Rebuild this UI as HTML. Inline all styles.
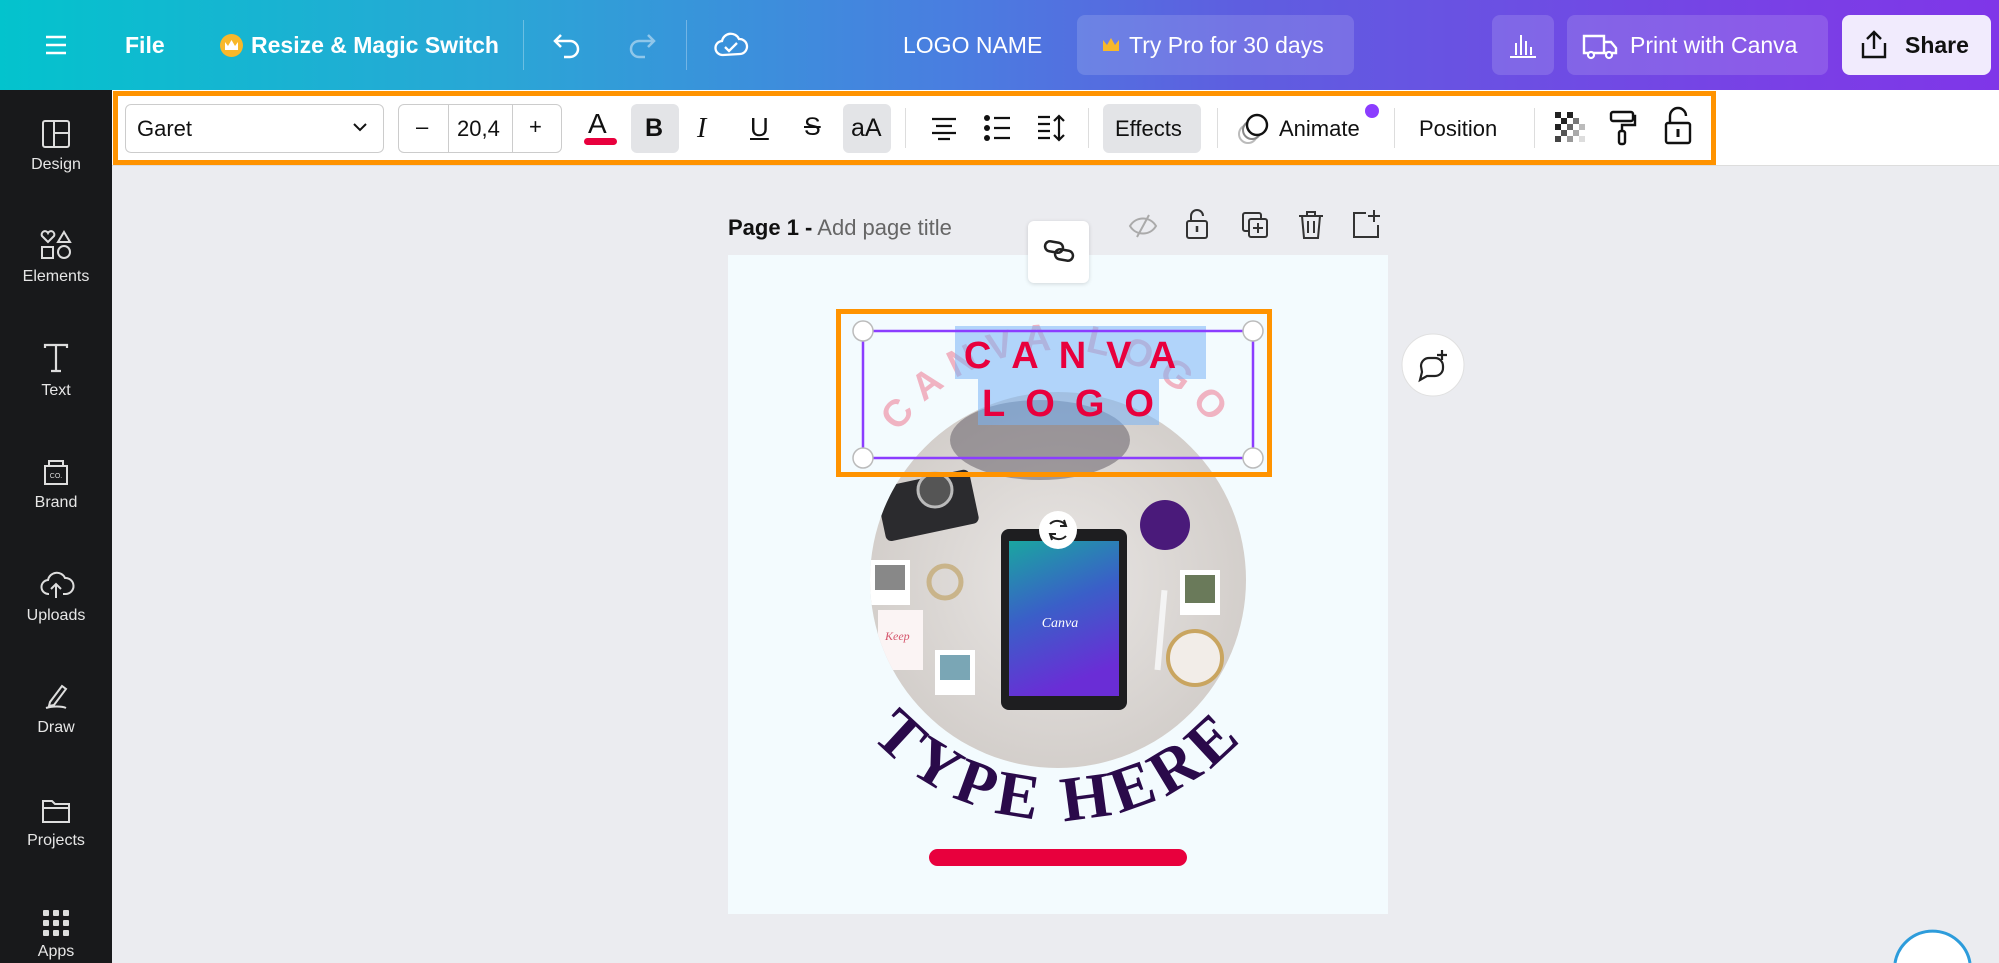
<!DOCTYPE html>
<html><head><meta charset="utf-8"><style>
*{box-sizing:border-box;margin:0;padding:0}
html,body{width:1999px;height:963px;overflow:hidden}
body{font-family:"Liberation Sans",sans-serif;background:#ebecf0;position:relative}
.abs{position:absolute}
#top{left:0;top:0;width:1999px;height:90px;background:linear-gradient(90deg,#03c3cd 0%,#2aa6d6 25%,#4a7de0 48%,#5e5ee0 62%,#7a3fe6 90%,#7f36e8 100%)}
.tw{color:#fff;font-size:23px;font-weight:bold;position:absolute;top:32px}
.btn{position:absolute;border-radius:8px;background:rgba(255,255,255,.14)}
#side{left:0;top:90px;width:112px;height:873px;background:#18191b}
.si{position:absolute;width:112px;text-align:center;color:#e6e6e6;font-size:16px}
#tb{left:112px;top:90px;width:1887px;height:76px;background:#fff;border-bottom:1px solid #ddd}
#ob{left:113px;top:91px;width:1603px;height:74px;border:5px solid #ff9300}
.t{position:absolute;font-size:22px;color:#111}
.sep{position:absolute;top:108px;width:1px;height:40px;background:#ddd}
.gbg{position:absolute;background:#e3e4e7;border-radius:6px}
svg{position:absolute;overflow:visible}
</style></head><body>
<div id="top" class="abs"></div>
<svg style="left:44px;top:34px" width="24" height="22"><path d="M2 3h20M2 11h20M2 19h20" stroke="#fff" stroke-width="2.5"/></svg>
<div class="tw" style="left:125px">File</div>
<div class="abs" style="left:220px;top:34px;width:23px;height:23px;border-radius:50%;background:#f8b82a"></div>
<svg style="left:224px;top:39px" width="15" height="12"><path d="M1 3l3 4 3.5-6 3.5 6 3-4v8H1z" fill="#fff"/></svg>
<div class="tw" style="left:251px">Resize &amp; Magic Switch</div>
<div class="abs" style="left:523px;top:20px;width:1px;height:50px;background:rgba(255,255,255,.3)"></div>
<svg style="left:553px;top:32px" width="30" height="28"><path d="M8 3L2 9l6 6M2 9h15a8 8 0 010 16h-6" stroke="#fff" stroke-width="2.5" fill="none"/></svg>
<svg style="left:626px;top:32px" width="30" height="28"><path d="M22 3l6 6-6 6M28 9H13a8 8 0 000 16h6" stroke="rgba(255,255,255,.45)" stroke-width="2.5" fill="none"/></svg>
<div class="abs" style="left:686px;top:20px;width:1px;height:50px;background:rgba(255,255,255,.3)"></div>
<svg style="left:714px;top:30px" width="34" height="30"><path d="M9 25a7 7 0 01-1-14 9 9 0 0117-2 7 7 0 011 15z" stroke="#fff" stroke-width="2.3" fill="none"/><path d="M11 17l4 4 8-8" stroke="#fff" stroke-width="2.3" fill="none"/></svg>
<div class="tw" style="left:903px;font-weight:normal">LOGO NAME</div>
<div class="btn" style="left:1077px;top:15px;width:277px;height:60px"></div>
<svg style="left:1102px;top:37px" width="18" height="16"><path d="M1 3l4 5 4-7 4 7 4-5v11H1z" fill="#f8b82a"/></svg>
<div class="tw" style="left:1129px;font-weight:normal">Try Pro for 30 days</div>
<div class="btn" style="left:1492px;top:15px;width:62px;height:60px"></div>
<svg style="left:1508px;top:31px" width="30" height="28"><path d="M2 26h26M8 24V12M13 24V4M18 24V10M23 24V16" stroke="#fff" stroke-width="2"/></svg>
<div class="btn" style="left:1567px;top:15px;width:261px;height:60px"></div>
<svg style="left:1582px;top:32px" width="36" height="28"><path d="M2 4h20v17H2zM22 10h7l5 6v5h-12" stroke="#fff" stroke-width="2.4" fill="none"/><circle cx="9" cy="23" r="3" fill="#6b55e5" stroke="#fff" stroke-width="2.2"/><circle cx="27" cy="23" r="3" fill="#6b55e5" stroke="#fff" stroke-width="2.2"/></svg>
<div class="tw" style="left:1630px;font-weight:normal">Print with Canva</div>
<div class="abs" style="left:1842px;top:15px;width:149px;height:60px;border-radius:8px;background:#f1ebfd"></div>
<svg style="left:1859px;top:29px" width="30" height="32"><path d="M4 14v14h22V14M15 20V3M8 10l7-7 7 7" stroke="#111" stroke-width="2.4" fill="none"/></svg>
<div class="tw" style="left:1905px;color:#111">Share</div>

<div id="side" class="abs"></div>
<svg style="left:42px;top:120px" width="28" height="28"><rect x="1" y="1" width="26" height="26" rx="2" stroke="#ddd" stroke-width="2" fill="none"/><path d="M12 1v26M12 13h15" stroke="#ddd" stroke-width="2"/></svg>
<div class="si" style="top:156px">Design</div>
<svg style="left:40px;top:230px" width="32" height="30"><path d="M8 12L2 6a3 3 0 016-3 3 3 0 016 3z" stroke="#ddd" stroke-width="2" fill="none"/><path d="M24 2l6 10H18z" stroke="#ddd" stroke-width="2" fill="none"/><rect x="2" y="17" width="11" height="11" stroke="#ddd" stroke-width="2" fill="none"/><circle cx="24" cy="22" r="6" stroke="#ddd" stroke-width="2" fill="none"/></svg>
<div class="si" style="top:268px">Elements</div>
<svg style="left:42px;top:344px" width="28" height="28"><path d="M3 4V1h22v3M14 1v26M9 27h10" stroke="#ddd" stroke-width="2.2" fill="none"/></svg>
<div class="si" style="top:382px">Text</div>
<svg style="left:42px;top:456px" width="28" height="30"><path d="M3 10h22v18H3zM7 10V5h14v5" stroke="#ddd" stroke-width="2" fill="none"/><text x="14" y="22" font-size="7" fill="#ddd" text-anchor="middle" font-family="Liberation Sans">CO.</text></svg>
<div class="si" style="top:494px">Brand</div>
<svg style="left:40px;top:570px" width="32" height="30"><path d="M9 24a7 7 0 01-1-14 9 9 0 0117-2 7 7 0 011 16h-3M16 28V14M11 19l5-5 5 5" stroke="#ddd" stroke-width="2" fill="none"/></svg>
<div class="si" style="top:607px">Uploads</div>
<svg style="left:42px;top:682px" width="28" height="30"><path d="M4 26c6-2 16-2 20 0M8 20l12-16 4 3-12 16-5 1z" stroke="#ddd" stroke-width="2" fill="none"/></svg>
<div class="si" style="top:719px">Draw</div>
<svg style="left:41px;top:798px" width="30" height="26"><path d="M2 3h9l3 3h14v18H2z" stroke="#ddd" stroke-width="2" fill="none"/><path d="M2 10h26" stroke="#ddd" stroke-width="2"/></svg>
<div class="si" style="top:832px">Projects</div>
<svg style="left:43px;top:910px" width="26" height="26"><g fill="#ddd"><rect x="0" y="0" width="6" height="6" rx="1"/><rect x="10" y="0" width="6" height="6" rx="1"/><rect x="20" y="0" width="6" height="6" rx="1"/><rect x="0" y="10" width="6" height="6" rx="1"/><rect x="10" y="10" width="6" height="6" rx="1"/><rect x="20" y="10" width="6" height="6" rx="1"/><rect x="0" y="20" width="6" height="6" rx="1"/><rect x="10" y="20" width="6" height="6" rx="1"/><rect x="20" y="20" width="6" height="6" rx="1"/></g></svg>
<div class="si" style="top:943px">Apps</div>

<div id="tb" class="abs"></div>
<div id="ob" class="abs"></div>
<div class="abs" style="left:125px;top:104px;width:259px;height:49px;border:1px solid #ccc;border-radius:6px"></div>
<div class="t" style="left:137px;top:116px">Garet</div>
<svg style="left:352px;top:122px" width="16" height="10"><path d="M2 2l6 6 6-6" stroke="#111" stroke-width="2" fill="none"/></svg>
<div class="abs" style="left:398px;top:104px;width:164px;height:49px;border:1px solid #ccc;border-radius:6px"></div>
<div class="abs" style="left:448px;top:104px;width:1px;height:49px;background:#ccc"></div>
<div class="abs" style="left:512px;top:104px;width:1px;height:49px;background:#ccc"></div>
<div class="t" style="left:416px;top:114px">–</div>
<div class="t" style="left:457px;top:116px">20,4</div>
<div class="t" style="left:529px;top:114px">+</div>
<div class="t" style="left:588px;top:108px;font-size:28px">A</div>
<div class="abs" style="left:584px;top:138px;width:33px;height:7px;border-radius:4px;background:#e8003d"></div>
<div class="gbg" style="left:631px;top:104px;width:48px;height:49px"></div>
<div class="t" style="left:645px;top:114px;font-weight:bold;font-size:25px">B</div>
<div class="t" style="left:697px;top:113px;font-family:'Liberation Serif';font-style:italic;font-size:28px">I</div>
<div class="t" style="left:750px;top:112px;font-size:26px;text-decoration:underline">U</div>
<div class="t" style="left:804px;top:113px;font-size:25px;text-decoration:line-through">S</div>
<div class="gbg" style="left:843px;top:104px;width:48px;height:49px"></div>
<div class="t" style="left:851px;top:114px;font-size:25px">aA</div>
<div class="sep" style="left:905px"></div>
<svg style="left:930px;top:116px" width="28" height="24"><path d="M2 3h24M6 10h16M2 17h24M8 23h12" stroke="#111" stroke-width="2.2"/></svg>
<svg style="left:984px;top:114px" width="28" height="28"><g fill="#111"><circle cx="3" cy="4" r="3"/><circle cx="3" cy="14" r="3"/><circle cx="3" cy="24" r="3"/></g><path d="M10 4h16M10 14h16M10 24h16" stroke="#111" stroke-width="2.2"/></svg>
<svg style="left:1036px;top:114px" width="30" height="28"><path d="M2 3h12M2 10h12M2 17h12M2 24h12M23 2v24M18 7l5-5 5 5M18 21l5 5 5-5" stroke="#111" stroke-width="2.2" fill="none"/></svg>
<div class="sep" style="left:1088px"></div>
<div class="gbg" style="left:1103px;top:104px;width:98px;height:49px"></div>
<div class="t" style="left:1115px;top:116px">Effects</div>
<div class="sep" style="left:1217px"></div>
<svg style="left:1238px;top:112px" width="36" height="34"><circle cx="10" cy="22" r="9" stroke="#bbb" stroke-width="2" fill="none"/><circle cx="14" cy="18" r="9" stroke="#888" stroke-width="2" fill="#fff"/><circle cx="19" cy="13" r="10" stroke="#111" stroke-width="2.4" fill="#fff"/></svg>
<div class="t" style="left:1279px;top:116px">Animate</div>
<div class="abs" style="left:1365px;top:104px;width:14px;height:14px;border-radius:50%;background:#8b3dff"></div>
<div class="sep" style="left:1394px"></div>
<div class="t" style="left:1419px;top:116px">Position</div>
<div class="sep" style="left:1534px"></div>
<svg style="left:1555px;top:112px" width="30" height="32"><g fill="#222"><rect x="0" y="0" width="6" height="6"/><rect x="12" y="0" width="6" height="6"/><rect x="6" y="6" width="6" height="6"/><rect x="18" y="6" width="6" height="6" fill="#777"/><rect x="0" y="12" width="6" height="6"/><rect x="12" y="12" width="6" height="6" fill="#666"/><rect x="6" y="18" width="6" height="6" fill="#555"/><rect x="18" y="18" width="6" height="6" fill="#aaa"/><rect x="0" y="24" width="6" height="6" fill="#444"/><rect x="12" y="24" width="6" height="6" fill="#999"/><rect x="24" y="12" width="6" height="6" fill="#bbb"/><rect x="24" y="24" width="6" height="6" fill="#ddd"/></g></svg>
<svg style="left:1609px;top:110px" width="28" height="36"><rect x="2" y="2" width="22" height="9" rx="2" stroke="#111" stroke-width="2.4" fill="none"/><path d="M24 6h2v9H13v6" stroke="#111" stroke-width="2.4" fill="none"/><rect x="10" y="21" width="6" height="13" rx="2" stroke="#111" stroke-width="2.4" fill="none"/></svg>
<svg style="left:1664px;top:108px" width="28" height="38"><path d="M6 15V8a8 8 0 0116 0" stroke="#111" stroke-width="2.4" fill="none"/><rect x="2" y="15" width="24" height="20" rx="2" stroke="#111" stroke-width="2.4" fill="none"/><path d="M14 21v8" stroke="#111" stroke-width="3"/></svg>

<div class="abs" style="left:728px;top:215px;font-size:22px;color:#111"><b>Page 1 -</b> <span style="color:#666">Add page title</span></div>
<svg style="left:1128px;top:213px" width="30" height="26"><path d="M2 13c6-10 20-10 26 0-6 10-20 10-26 0zM9 24L21 2" stroke="#aaa" stroke-width="2" fill="none"/></svg>
<svg style="left:1186px;top:208px" width="22" height="32"><path d="M5 13V8a6 6 0 0112 0" stroke="#333" stroke-width="2" fill="none"/><rect x="1" y="13" width="20" height="17" rx="2" stroke="#333" stroke-width="2" fill="none"/><path d="M11 18v6" stroke="#333" stroke-width="2.5"/></svg>
<svg style="left:1242px;top:212px" width="28" height="28"><rect x="1" y="1" width="18" height="18" rx="2" stroke="#333" stroke-width="2" fill="none"/><rect x="7" y="7" width="18" height="18" rx="2" stroke="#333" stroke-width="2" fill="#ebecf0"/><path d="M16 11v10M11 16h10" stroke="#333" stroke-width="2"/></svg>
<svg style="left:1298px;top:210px" width="26" height="30"><path d="M1 6h24M9 6V2h8v4M4 6l2 22h14l2-22M10 11v12M16 11v12" stroke="#333" stroke-width="2" fill="none"/></svg>
<svg style="left:1352px;top:209px" width="30" height="30"><path d="M14 4H2v24h24V16M22 1v12M16 7h12" stroke="#333" stroke-width="2" fill="none"/></svg>

<div class="abs" style="left:728px;top:255px;width:660px;height:659px;background:#f3fbfe"></div>
<div class="abs" style="left:1028px;top:221px;width:61px;height:62px;background:#fff;border-radius:6px;box-shadow:0 1px 4px rgba(0,0,0,.15)"></div>
<svg style="left:1043px;top:240px" width="32" height="22"><rect x="2" y="2" width="18" height="10" rx="5" stroke="#222" stroke-width="2.5" fill="none" transform="rotate(10 11 7)"/><rect x="12" y="10" width="18" height="10" rx="5" stroke="#222" stroke-width="2.5" fill="none" transform="rotate(10 21 15)"/></svg>

<svg style="left:0;top:0" width="1999" height="963">
<defs>
<clipPath id="c"><circle cx="1058" cy="580" r="188"/></clipPath>
<linearGradient id="scr" x1="0" y1="0" x2="0.3" y2="1"><stop offset="0" stop-color="#1aa6a0"/><stop offset=".5" stop-color="#3a5fc8"/><stop offset="1" stop-color="#6a2dd6"/></linearGradient>
<radialGradient id="mb" cx=".5" cy=".5" r=".6"><stop offset="0" stop-color="#e9e6e4"/><stop offset="1" stop-color="#cfcac6"/></radialGradient>
</defs>
<g clip-path="url(#c)">
<rect x="870" y="392" width="376" height="376" fill="url(#mb)"/>
<ellipse cx="1040" cy="440" rx="90" ry="40" fill="#5b5560" opacity=".5"/>
<rect x="880" y="478" width="95" height="55" rx="6" fill="#2b2b2e" transform="rotate(-12 927 505)"/>
<circle cx="935" cy="490" r="17" fill="#555" stroke="#bbb" stroke-width="3"/>
<circle cx="1165" cy="525" r="25" fill="#4a1a7a"/>
<rect x="1180" y="570" width="40" height="45" fill="#fff"/><rect x="1185" y="575" width="30" height="28" fill="#6a7a5a"/>
<circle cx="1195" cy="658" r="27" fill="#f2ede8" stroke="#c9a560" stroke-width="4"/>
<rect x="870" y="560" width="40" height="45" fill="#fff"/><rect x="875" y="565" width="30" height="25" fill="#888"/>
<rect x="878" y="610" width="45" height="60" fill="#fbf4f4"/>
<text x="885" y="640" font-family="Liberation Serif" font-style="italic" font-size="12" fill="#d5546b">Keep</text>
<circle cx="945" cy="582" r="16" fill="none" stroke="#c9b48a" stroke-width="5"/>
<rect x="935" y="650" width="40" height="45" fill="#fff"/><rect x="940" y="655" width="30" height="25" fill="#7aa6b5"/>
<rect x="1001" y="529" width="126" height="181" rx="8" fill="#1e1e20"/>
<rect x="1009" y="541" width="110" height="155" fill="url(#scr)"/>
<text x="1060" y="627" font-family="Liberation Serif" font-style="italic" font-size="14" fill="#fff" text-anchor="middle">Canva</text>
<rect x="1158" y="590" width="6" height="80" fill="#f4f4f4" transform="rotate(5 1160 630)"/>
</g>
<path id="arcTop" d="M863 545 A195 195 0 0 1 1253 545" fill="none"/>
<text font-family="Liberation Sans" font-weight="bold" font-size="38" fill="#f0a7b8" opacity=".85" letter-spacing="12"><textPath href="#arcTop" startOffset="50%" text-anchor="middle">CANVA LOGO</textPath></text>
<rect x="955" y="326" width="251" height="53" fill="#7ab4f5" opacity=".55"/>
<rect x="978" y="379" width="181" height="46" fill="#7ab4f5" opacity=".55"/>
<text x="1080" y="368" font-family="Liberation Sans" font-weight="bold" font-size="38" fill="#e8003d" text-anchor="middle" letter-spacing="20">CANVA</text>
<text x="1078" y="416" font-family="Liberation Sans" font-weight="bold" font-size="38" fill="#e8003d" text-anchor="middle" letter-spacing="20">LOGO</text>
<rect x="838.5" y="311.5" width="431" height="163" fill="none" stroke="#ff9300" stroke-width="5"/>
<rect x="863" y="331" width="390" height="127" fill="none" stroke="#8b3dff" stroke-width="2.5"/>
<g fill="#fff" stroke="#bbb" stroke-width="1.5"><circle cx="863" cy="331" r="10"/><circle cx="1253" cy="331" r="10"/><circle cx="863" cy="458" r="10"/><circle cx="1253" cy="458" r="10"/></g>
<circle cx="1058" cy="530" r="19" fill="#fff"/>
<path d="M1050 524a10 10 0 0116 2M1066 536a10 10 0 01-16-2M1064 520l2 6-6 0M1052 540l-2-6 6 0" stroke="#222" stroke-width="2" fill="none"/>
<path id="arcB" d="M808 570 A250 250 0 0 0 1308 570" fill="none"/>
<text font-family="Liberation Serif" font-weight="bold" font-size="64" fill="#2a0a4a" letter-spacing="6"><textPath href="#arcB" startOffset="50%" text-anchor="middle">TYPE HERE</textPath></text>
<rect x="929" y="849" width="258" height="17" rx="8.5" fill="#e8003d"/>
<circle cx="1433" cy="365" r="31" fill="#fff" stroke="#e0e0e0"/>
<path d="M1422 372l-2 8 7-4h8a8 8 0 008-8v-2a8 8 0 00-8-8h-6a8 8 0 00-8 8z" stroke="#222" stroke-width="2.2" fill="none"/>
<path d="M1442 350v10M1437 355h10" stroke="#222" stroke-width="2.2"/>
<path d="M1895 963 A38 38 0 0 1 1970 963" fill="#fff" stroke="#2d9cdb" stroke-width="3"/>
</svg>
</body></html>
